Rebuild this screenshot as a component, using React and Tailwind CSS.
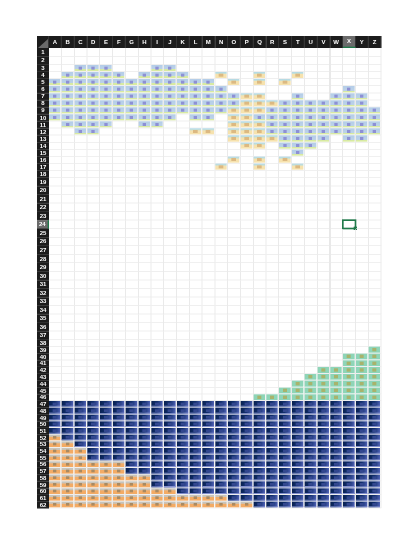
const COLS = "ABCDEFGHIJKLMNOPQRSTUVWXYZ".split("");

const range = (from, to) => COLS.slice(COLS.indexOf(from), COLS.indexOf(to) + 1).join("");

// which thumbnail sits in which cell, per row
const BLUE = {
    3: "CDEIJ",
    4: "BCDEFHIJK",
    5: range("A", "M"),
    6: range("A", "N") + "X",
    7: range("A", "O") + "TWXY",
    8: range("A", "O") + range("S", "Y"),
    9: range("A", "N") + range("R", "Z"),
    10: range("A", "J") + "LMQ" + range("R", "Z"),
    11: "BCDEHI" + range("R", "Z"),
    12: "CD" + range("R", "Z"),
    13: "STUVXY",
    14: "STU",
    15: "T",
};
const SAND = {
    4: "NQT",
    5: "OQS",
    7: "PQ",
    8: "PQR",
    9: "OPQ",
    10: "OP",
    11: "OPQ",
    12: "LMOPQ",
    13: "OPQR",
    14: "PQ",
    16: "OQS",
    17: "NQT",
};
const GREEN = {
    39: "Z",
    40: "XYZ",
    41: "XYZ",
    42: range("V", "Z"),
    43: range("U", "Z"),
    44: range("T", "Z"),
    45: range("S", "Z"),
    46: range("Q", "Z"),
};
const ORANGE = {
    52: "A",
    53: "AB",
    54: "ABC",
    55: "ABC",
    56: range("A", "F"),
    57: range("A", "F"),
    58: range("A", "H"),
    59: range("A", "H"),
    60: range("A", "J"),
    61: range("A", "N"),
    62: range("A", "P"),
};

function kindOf(row, col) {
    if (BLUE[row]?.includes(col)) return "blue";
    if (SAND[row]?.includes(col)) return "sand";
    if (GREEN[row]?.includes(col)) return "green";
    if (ORANGE[row]?.includes(col)) return "orange";
    if (row >= 47) return "navy";
    return null;
}

const THUMB = {
    blue: "bg-[linear-gradient(to_bottom,#b4cde8_0%,#bcd2e8_74%,#d8eaa2_74%,#d8eaa2_100%)]",
    sand: "bg-[linear-gradient(to_bottom,#aed8ea_0%,#c8e0d6_26%,#f6e2ae_42%,#f6e2ae_100%)]",
    green: "bg-[#8ed5b8]",
    orange: "bg-[linear-gradient(to_bottom,#c8c4bb_0%,#c8c4bb_30%,#f3ab65_42%,#f3ab65_100%)]",
    navy: "bg-[linear-gradient(to_bottom,transparent_84%,#8490d0_84%),linear-gradient(100deg,#08204f_0%,#12306e_50%,#5566bb_100%)]",
};
const MARK = {
    blue: "h-[9px] w-[10px] bg-[#8d90d4]",
    sand: "h-[9px] w-[14px] bg-[#dcb982]",
    green: "h-[10px] w-[12px] bg-[#a8b36c]",
    orange: "h-[8px] w-[10px] bg-[#a98a62]",
    navy: "h-[8px] w-[12px] bg-[#33478f]",
};

function Thumb({ kind }) {
    return (
        <div className={`flex h-full w-full items-center justify-center ${THUMB[kind]}`}>
            <span className={MARK[kind]} />
        </div>
    );
}

function Cell({ row, col }) {
    const kind = kindOf(row, col);
    const pageBreak = col === "V" && row <= 46;
    const selected = row === 24 && col === "X";
    return (
        <div
            className={`relative border-b-[2px] border-r-[2px] border-b-[#e8e8e8] pb-[1px] pr-[2px] ${
                pageBreak ? "border-r-[#bdbdbd] border-r-dashed" : "border-r-[#e0e0e0]"
            }`}
        >
            {kind && <Thumb kind={kind} />}
            {selected && (
                <div className="absolute -inset-[3px] border-[5px] border-[#217a4b]">
                    <span className="absolute -bottom-[7px] -right-[7px] h-[10px] w-[10px] bg-[#217a4b]" />
                </div>
            )}
        </div>
    );
}

export default function App() {
    const rows = Array.from({ length: 62 }, (_, i) => i + 1);
    return (
        <div className="h-[543px] w-[417px] overflow-hidden bg-white pl-[36.6px] pt-[36px] font-['Liberation_Sans',Arial,sans-serif]">
            {/* drawn at 3x and scaled down: the columns are not whole pixels wide */}
            <div className="grid w-max origin-top-left scale-[0.33333] grid-cols-[36px_repeat(26,38.37px)] grid-rows-[36px_repeat(2,25.5px)_repeat(16,21.15px)_repeat(19,25.62px)_repeat(9,20.4px)_repeat(16,20.1px)] blur-[1px]">
                <div className="flex items-end justify-end border-r-[3px] border-[#333] bg-[#1c1c1c]">
                    <svg width="30" height="27" viewBox="0 0 10 9">
                        <path d="M10 0V9H0Z" fill="#6a6a6a" />
                    </svg>
                </div>
                {COLS.map((col) => (
                    <div
                        key={col}
                        className={`flex items-center justify-center border-r-[3px] border-[#333] text-[18px] font-bold leading-none text-white ${
                            col === "X" ? "border-b-[4px] border-b-[#217a4b] bg-[#6b6b6b]" : "bg-[#1c1c1c]"
                        }`}
                    >
                        {col}
                    </div>
                ))}
                {rows.map((row) => [
                    <div
                        key={`h${row}`}
                        className={`flex items-center justify-center border-b-[2px] border-[#3a3a3a] text-[18px] font-bold leading-none text-white ${
                            row === 24 ? "border-r-[4px] border-r-[#217a4b] bg-[#6b6b6b]" : "bg-[#1c1c1c]"
                        }`}
                    >
                        {row}
                    </div>,
                    ...COLS.map((col) => <Cell key={`${col}${row}`} row={row} col={col} />),
                ])}
            </div>
        </div>
    );
}
